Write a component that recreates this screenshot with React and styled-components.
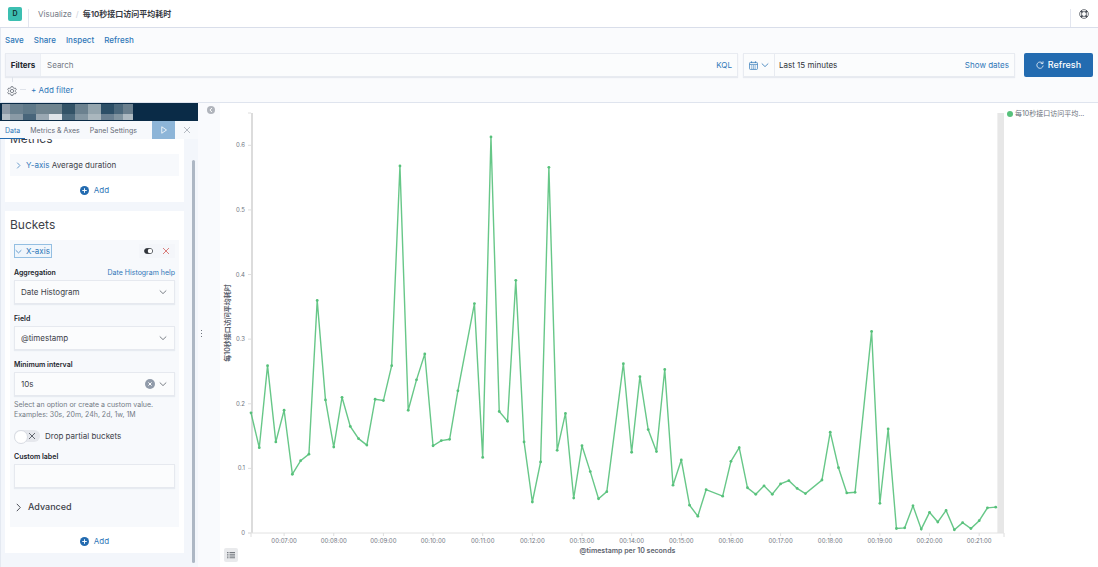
import React, { useLayoutEffect, useRef, useState } from 'react';
import styled, { createGlobalStyle } from 'styled-components';

const c = {
  blue: '#2f77b8',
  primary: '#236bb0',
  text: '#3d4149',
  dark: '#22252c',
  subdued: '#737984',
  border: '#e4e9f1',
  surface: '#fafbfd',
  side: '#f3f6fb',
  green: '#57c17b',
};

const Global = createGlobalStyle`
  * { box-sizing: border-box; }
  body {
    margin: 0;
    background: #fff;
    color: ${c.text};
    font: 8px/12px Inter, "Noto Sans CJK SC", sans-serif;
  }
  button, input, select { font: inherit; color: inherit; margin: 0; }
  a { color: ${c.blue}; text-decoration: none; }
  h2 { margin: 0; }
`;

const Shell = styled.div`
  display: flex;
  flex-direction: column;
  height: 100vh;
`;

const Header = styled.header`
  display: flex;
  align-items: stretch;
  height: 28px;
  border-bottom: 1px solid #d9deea;
`;
const LogoCell = styled.div`
  display: flex;
  align-items: center;
  padding: 0 6px 0 8px;
`;
const Logo = styled.a`
  width: 14px;
  height: 14px;
  border-radius: 2px;
  background: #3cbfb1;
  color: #10302f;
  font-size: 7px;
  font-weight: 600;
  line-height: 14px;
  text-align: center;
`;
const Rule = styled.span`
  width: 1px;
  margin-top: 9px;
  background: #e3e6ef;
`;
const Crumbs = styled.nav`
  display: flex;
  flex: 1;
  align-items: center;
  gap: 4px;
  padding-left: 9px;
  a { color: ${c.subdued}; }
  span { color: #cdd2db; }
  strong { color: #343741; font-weight: 600; }
`;
const HelpButton = styled.button`
  display: flex;
  align-items: center;
  padding: 0 9px 0 8px;
  border: 0;
  background: none;
`;

const TopZone = styled.section`
  display: flex;
  flex-direction: column;
  height: 75px;
  border-left: 1px solid ${c.border};
  border-bottom: 1px solid #dfe4ee;
  background: ${c.surface};
`;
const Menu = styled.nav`
  display: flex;
  align-items: center;
  gap: 10px;
  height: 25px;
  padding: 0 4px 2px;
  a { font-weight: 500; }
`;
const QueryRow = styled.div`
  display: flex;
  gap: 5px;
  height: 24px;
  padding: 0 5px 0 4px;
`;
const Field = styled.div`
  display: flex;
  align-items: stretch;
  flex: ${(p) => (p.$grow ? '1 1 0' : '0 0 272px')};
  min-width: 0;
  background: #fbfcfd;
  border: 1px solid #e8ebf1;
  box-shadow: 0 1px 1px rgba(100, 115, 150, 0.12);
`;
const FilterTab = styled.button`
  width: 35px;
  padding: 0;
  border: 0;
  border-right: 1px solid #eceff4;
  background: #f2f4f9;
  color: ${c.dark};
  font-weight: 700;
`;
const SearchInput = styled.input`
  flex: 1;
  min-width: 0;
  padding: 0 6px;
  border: 0;
  outline: 0;
  background: none;
  &::placeholder { color: ${c.subdued}; opacity: 1; }
`;
const LinkButton = styled.button`
  padding: 0 5px;
  border: 0;
  background: none;
  color: ${c.blue};
`;
const QuickSelect = styled.button`
  display: flex;
  align-items: center;
  gap: 3px;
  width: 31px;
  padding: 0 0 0 5px;
  border: 0;
  border-right: 1px solid #e8ebf1;
  background: none;
  color: ${c.blue};
`;
const RangeText = styled.span`
  flex: 1;
  padding-left: 4px;
  color: #2f333a;
  line-height: 22px;
`;
const RefreshButton = styled.button`
  display: flex;
  align-items: center;
  justify-content: center;
  gap: 4px;
  width: 69px;
  margin-left: 4px;
  padding: 0;
  border: 0;
  border-radius: 2px;
  background: ${c.primary};
  color: #fff;
  font-size: 9px;
  font-weight: 500;
`;
const FilterRow = styled.div`
  display: flex;
  align-items: center;
  height: 25px;
  padding-left: 6px;
  gap: 3px;
  a { padding-left: 2px; }
`;
const GearStack = styled.button`
  display: flex;
  flex-direction: column;
  align-items: center;
  align-self: flex-start;
  gap: 4px;
  padding: 0;
  border: 0;
  background: none;
  color: #666c76;
  &::before { content: ''; width: 1px; height: 5px; background: #dfe3ea; }
`;
const Dash = styled.span`
  width: 6px;
  height: 1px;
  background: #dfe3ea;
`;

const Editor = styled.main`
  display: grid;
  grid-template-columns: 198px 22px minmax(0, 1fr);
  flex: 1;
  min-height: 0;
`;
const Sidebar = styled.aside`
  display: flex;
  flex-direction: column;
  min-height: 0;
  background: ${c.side};
`;
const IndexBar = styled.div`
  height: 18px;
  padding: 1px 2px;
  background: #0a2b47;
`;
const Mosaic = styled.div`
  display: grid;
  grid-template-columns: 8px repeat(8, 13px) 9px 10px;
  grid-template-rows: 10px 6px;
`;
const Tile = styled.i`
  background: ${(p) => p.$tone};
`;
const Tabs = styled.div`
  display: flex;
  align-items: stretch;
  height: 18px;
  background: #f7f9fc;
`;
const Tab = styled.button`
  padding: 2px 5px 0;
  border: 0;
  border-bottom: 1px solid ${(p) => (p.$active ? c.primary : 'transparent')};
  background: none;
  color: ${(p) => (p.$active ? c.blue : '#666c77')};
  font-size: 7px;
  line-height: 15px;
  white-space: nowrap;
`;
const TabIcon = styled.button`
  display: flex;
  align-items: center;
  justify-content: center;
  width: 23px;
  margin-left: ${(p) => (p.$apply ? 'auto' : '0')};
  padding: 0;
  border: 0;
  background: ${(p) => (p.$apply ? '#8db5d8' : 'none')};
  color: ${(p) => (p.$apply ? '#fff' : '#a3a9b3')};
`;
const SideBody = styled.div`
  display: flex;
  flex: 1;
  min-height: 0;
  border-left: 1px solid ${c.border};
`;
const Scroller = styled.div`
  flex: 1;
  overflow-y: auto;
  scrollbar-width: none;
  padding: 4px 8px 14px 4px;
`;
const Rail = styled.div`
  width: 6px;
  padding: 21px 3px 4px 0;
`;
const Thumb = styled.div`
  width: 3px;
  height: 100%;
  border-radius: 2px;
  background: #adb7c4;
`;
const Card = styled.section`
  padding: 5px;
  background: #fff;
  & + & { margin-top: 9px; }
  h2 {
    padding: 0 0 6px;
    font-size: 12px;
    font-weight: 400;
    line-height: 18px;
  }
`;
const Item = styled.div`
  padding: ${(p) => (p.$open ? '4px 4px 12px' : '0 4px')};
  background: #f7f9fc;
`;
const ItemToggle = styled.button`
  display: flex;
  align-items: center;
  gap: 4px;
  height: ${(p) => (p.$focus ? '14px' : '22px')};
  padding: ${(p) => (p.$focus ? '0 1px 0 0' : '0 1px')};
  border: ${(p) => (p.$focus ? '1px solid #94bfe2' : '0')};
  background: ${(p) => (p.$focus ? '#f0f6fc' : 'none')};
  color: ${c.text};
  white-space: nowrap;
  svg, em { color: ${c.blue}; font-style: normal; }
`;
const ItemHead = styled.div`
  display: flex;
  align-items: center;
  justify-content: space-between;
  height: 14px;
`;
const IconPair = styled.div`
  display: flex;
  background: #f4f6fa;
  button {
    display: flex;
    align-items: center;
    justify-content: center;
    width: 18px;
    height: 14px;
    padding: 0;
    border: 0;
    background: none;
  }
`;
const AddButton = styled.button`
  display: flex;
  align-items: center;
  justify-content: center;
  gap: 5px;
  width: 100%;
  height: 14px;
  margin-top: 7px;
  padding: 0;
  border: 0;
  background: none;
  color: ${c.blue};
`;
const FormRow = styled.div`
  display: flex;
  flex-direction: column;
  margin-top: 9px;
`;
const LabelLine = styled.div`
  display: flex;
  justify-content: space-between;
  height: 13px;
  font-size: 7px;
  line-height: 11px;
  label { color: ${c.dark}; font-weight: 600; }
`;
const Control = styled.div`
  display: flex;
  align-items: center;
  gap: 4px;
  height: 24px;
  padding-right: 7px;
  border: 1px solid #e6e9ef;
  background: #fbfcfd;
  box-shadow: 0 1px 1px rgba(100, 115, 150, 0.1);
  input, select {
    flex: 1;
    width: 100%;
    min-width: 0;
    height: 22px;
    padding: 0 0 0 6px;
    border: 0;
    outline: 0;
    appearance: none;
    background: none;
  }
  select { margin-right: -16px; padding-right: 16px; }
  svg { flex: none; pointer-events: none; color: #5b616b; }
`;
const ClearButton = styled.button`
  display: flex;
  padding: 0;
  border: 0;
  background: none;
`;
const Help = styled.p`
  margin: 4px 0 0;
  color: ${c.subdued};
  font-size: 7px;
  line-height: 10px;
  white-space: nowrap;
`;
const SwitchRow = styled.label`
  display: flex;
  align-items: center;
  gap: 5px;
  height: 12px;
  margin-top: 10px;
`;
const Switch = styled.input`
  appearance: none;
  width: 26px;
  height: 12px;
  margin: 0;
  border-radius: 6px;
  background:
    linear-gradient(45deg, transparent 46%, #62676f 46%, #62676f 54%, transparent 54%) 15px 3px / 6px 6px no-repeat,
    linear-gradient(-45deg, transparent 46%, #62676f 46%, #62676f 54%, transparent 54%) 15px 3px / 6px 6px no-repeat,
    #e6e8ed;
  &::before {
    content: '';
    display: block;
    width: 12px;
    height: 12px;
    border: 1px solid #d8dce3;
    border-radius: 50%;
    background: #fff;
  }
`;
const AdvancedButton = styled.button`
  display: flex;
  align-items: center;
  gap: 5px;
  height: 16px;
  margin-top: 11px;
  padding: 0;
  border: 0;
  background: none;
  font-size: 9px;
  font-weight: 500;
`;

const Resizer = styled.div`
  display: flex;
  flex-direction: column;
  justify-content: space-between;
  background: #f9fafd;
  button {
    display: flex;
    padding: 0;
    border: 0;
    background: none;
    align-self: flex-end;
    margin: 3px 5px 0 0;
  }
  svg:last-child { margin-left: 2px; }
  &::after { content: ''; height: 12px; }
`;
const VisPane = styled.section`
  display: grid;
  grid-template-columns: minmax(0, 1fr) 92px;
  min-height: 0;
  position: relative;
`;
const ChartBox = styled.div`
  min-width: 0;
  min-height: 0;
  overflow: hidden;
  svg { display: block; }
  text { fill: #6f7580; font-size: 6px; }
  text.title { fill: #5d636e; font-size: 7px; font-weight: 600; }
`;
const Legend = styled.ul`
  margin: 0;
  padding: 5px 11px 0 1px;
  list-style: none;
  font-size: 7px;
  color: #6b717c;
`;
const LegendItem = styled.li`
  display: flex;
  align-items: center;
  gap: 2px;
  &::before {
    content: '';
    flex: none;
    width: 6px;
    height: 6px;
    border-radius: 50%;
    background: ${c.green};
  }
  span { overflow: hidden; white-space: nowrap; text-overflow: ellipsis; }
`;
const LegendToggle = styled.button`
  position: absolute;
  left: 4px;
  bottom: 5px;
  display: flex;
  align-items: center;
  justify-content: center;
  width: 14px;
  height: 14px;
  padding: 0;
  border: 0;
  border-radius: 2px;
  background: #e9eaec;
  color: #50555e;
`;

const Svg = ({ size = 8, children, ...rest }) => (
  <svg width={size} height={size} viewBox="0 0 16 16" fill="none" stroke="currentColor" strokeWidth="1.6" aria-hidden="true" {...rest}>
    {children}
  </svg>
);
const ChevronDown = (p) => <Svg {...p}><path d="M1.5 5 8 11.2 14.5 5" /></Svg>;
const ChevronRight = (p) => <Svg {...p}><path d="M5 1.5 11.2 8 5 14.5" /></Svg>;
const Cross = (p) => <Svg {...p}><path d="M2 2l12 12M14 2 2 14" /></Svg>;
const Plus = () => (
  <Svg size={9} stroke="none">
    <circle cx="8" cy="8" r="8" fill={c.primary} />
    <path d="M8 4v8M4 8h8" stroke="#fff" strokeWidth="1.7" />
  </Svg>
);
const LifeRing = () => (
  <Svg size={10} stroke="#454a53" strokeWidth="1.2">
    <circle cx="8" cy="8" r="7" />
    <circle cx="8" cy="8" r="4" />
    <path d="M3.1 3.1l2.3 2.3M12.9 3.1l-2.3 2.3M3.1 12.9l2.3-2.3M12.9 12.9l-2.3-2.3" strokeWidth="3" />
  </Svg>
);
const Gear = () => (
  <Svg size={10} strokeWidth="1.3">
    <path d="M6.6 1h2.8l.5 1.9 1.5.9 1.9-.6 1.5 2.5-1.4 1.4v1.8l1.4 1.4-1.5 2.5-1.9-.6-1.5.9L9.4 15H6.6l-.5-1.9-1.5-.9-1.9.6-1.5-2.5 1.400-1.400V7.100L1.200 5.700l1.500-2.500 1.900.6 1.500-.9z" />
    <circle cx="8" cy="8" r="2.6" />
  </Svg>
);
const Calendar = () => (
  <Svg size={9} strokeWidth="1.3">
    <rect x="1" y="2.5" width="14" height="12.5" rx="1.5" />
    <path d="M1 6h14M4.5 .5v3M11.5 .5v3" />
    <path d="M4 8.5h8M4 10.7h8M4 12.9h8" strokeDasharray="1.8 1.2" />
  </Svg>
);
const RefreshIcon = () => (
  <Svg size={8} strokeWidth="1.5">
    <path d="M12.8 4.2A6.3 6.3 0 1 0 14.3 9M14 .8v4.4H9.5" />
  </Svg>
);

/* [ten-second bucket, average duration in ms]; buckets without hits are absent */
const SERIES = [
  [0, 186], [1, 132], [2, 259], [3, 141], [4, 190], [5, 91], [6, 112], [7, 122], [8, 360], [9, 206],
  [10, 133], [11, 210], [12, 165], [13, 146], [14, 136], [15, 207], [16, 205], [17, 259], [18, 568], [19, 190],
  [20, 237], [21, 277], [22, 135], [23, 143], [24, 145], [25, 220], [27, 355], [28, 117], [29, 613], [30, 188],
  [31, 173], [32, 391], [33, 141], [34, 48], [35, 110], [36, 566], [37, 128], [38, 185], [39, 54], [40, 135],
  [41, 95], [42, 53], [43, 64], [45, 262], [46, 125], [47, 242], [48, 160], [49, 126], [50, 253], [51, 74],
  [52, 113], [53, 43], [54, 26], [55, 67], [57, 57], [58, 111], [59, 132], [60, 70], [61, 60], [62, 73],
  [63, 60], [64, 76], [65, 81], [66, 69], [67, 61], [69, 82], [70, 156], [71, 101], [72, 62], [73, 63],
  [75, 312], [76, 46], [77, 161], [78, 7], [79, 8], [80, 42], [81, 6], [82, 32], [83, 17], [84, 35],
  [85, 5], [86, 16], [87, 7], [88, 19], [89, 39], [90, 40],
];
const BUCKETS = 91;
const MAX = 650;

function Chart() {
  const box = useRef(null);
  const [size, setSize] = useState({ w: 786, h: 464 });
  useLayoutEffect(() => {
    const measure = () => setSize({ w: box.current.clientWidth, h: box.current.clientHeight });
    measure();
    window.addEventListener('resize', measure);
    return () => window.removeEventListener('resize', measure);
  }, []);

  const left = 31;
  const right = size.w - 2;
  const top = 10;
  const bottom = size.h - 34;
  const x = (i) => left + ((right - left) * i) / BUCKETS;
  const y = (v) => bottom - ((bottom - top) * v) / MAX;
  const minutes = Array.from({ length: 15 }, (_, i) => i + 7);
  const points = SERIES.map(([i, v]) => [x(i), y(v)]);

  return (
    <ChartBox ref={box}>
      <svg width={size.w} height={size.h} role="img" aria-label="每10秒接口访问平均耗时">
        <rect x={x(90.2)} y={top} width={right - x(90.2)} height={bottom - top} fill="#e7e7e7" />
        <rect x={left} y={top} width="2" height={bottom - top} fill="#dcdcdc" />
        <path d={`M${left - 3} ${top}H${left}M${left} ${bottom}v4M${right} ${bottom}v4`} stroke="#dedede" />
        <path d={`M${left - 3} ${bottom}H${right}`} stroke="#e2e2e2" />
        {[0, 1, 2, 3, 4, 5, 6].map((t) => (
          <g key={t}>
            <path d={`M${left - 3} ${y(t * 100)}h3`} stroke="#dedede" />
            <text x={left - 6} y={y(t * 100) + 2} textAnchor="end">{t ? `0.${t}` : '0'}</text>
          </g>
        ))}
        {minutes.map((m) => (
          <g key={m}>
            <path d={`M${x((m - 7) * 6 + 4)} ${bottom}v3`} stroke="#dedede" />
            <text x={x((m - 7) * 6 + 4)} y={bottom + 10} textAnchor="middle">
              {`00:${String(m).padStart(2, '0')}:00`}
            </text>
          </g>
        ))}
        <text className="title" x={(left + right) / 2} y={bottom + 20} textAnchor="middle">@timestamp per 10 seconds</text>
        <text className="title" textAnchor="middle" transform={`translate(10 ${(top + bottom) / 2}) rotate(-90)`}>
          每10秒接口访问平均耗时
        </text>
        <polyline points={points.map((p) => p.join(',')).join(' ')} fill="none" stroke={c.green} strokeWidth="1.4" strokeOpacity="0.9" />
        {points.map(([px, py]) => (
          <circle key={px} cx={px} cy={py} r="1.4" fill={c.green} />
        ))}
      </svg>
    </ChartBox>
  );
}

const TILES = [
  '#8e9ba8', '#6a8190', '#5f7989', '#70848f', '#6f848f', '#335367', '#6b818f', '#94a5ae', '#2c4f67', '#4b687c', '#6a7f8e',
  '#b3bdc5', '#8a9aa6', '#48657a', '#9aa8b2', '#e0e5e9', '#4e6b7e', '#8497a3', '#aab7be', '#6a8091', '#8194a0', '#adb9c1',
];

function SideForm() {
  const scroller = useRef(null);
  useLayoutEffect(() => {
    scroller.current.scrollTop = scroller.current.scrollHeight;
  }, []);
  return (
    <SideBody>
      <Scroller ref={scroller}>
        <Card>
          <h2>Metrics</h2>
          <Item>
            <ItemToggle><ChevronRight size={7} /><span><em>Y-axis</em> Average duration</span></ItemToggle>
          </Item>
          <AddButton><Plus />Add</AddButton>
        </Card>
        <Card>
          <h2>Buckets</h2>
          <Item $open>
            <ItemHead>
              <ItemToggle $focus><ChevronDown size={7} /><em>X-axis</em></ItemToggle>
              <IconPair>
                <button aria-label="Disable aggregation">
                  <svg width="9" height="6" viewBox="0 0 18 12">
                    <rect x="1" y="1" width="16" height="10" rx="5" fill="#30343b" stroke="#30343b" strokeWidth="1.5" />
                    <circle cx="12" cy="6" r="4.5" fill="#fff" />
                  </svg>
                </button>
                <button aria-label="Remove aggregation"><Cross size={8} color="#d2605b" /></button>
              </IconPair>
            </ItemHead>
            <FormRow>
              <LabelLine>
                <label htmlFor="agg">Aggregation</label>
                <a href="#help">Date Histogram help</a>
              </LabelLine>
              <Control>
                <select id="agg"><option>Date Histogram</option></select>
                <ChevronDown />
              </Control>
            </FormRow>
            <FormRow>
              <LabelLine><label htmlFor="field">Field</label></LabelLine>
              <Control>
                <select id="field"><option>@timestamp</option></select>
                <ChevronDown />
              </Control>
            </FormRow>
            <FormRow>
              <LabelLine><label htmlFor="interval">Minimum interval</label></LabelLine>
              <Control>
                <input id="interval" defaultValue="10s" />
                <ClearButton aria-label="Clear input">
                  <Svg size={10} stroke="none">
                    <circle cx="8" cy="8" r="8" fill="#919baa" />
                    <path d="M5.5 5.5l5 5M10.5 5.5l-5 5" stroke="#fff" strokeWidth="1.6" />
                  </Svg>
                </ClearButton>
                <ChevronDown />
              </Control>
              <Help>Select an option or create a custom value.<br />Examples: 30s, 20m, 24h, 2d, 1w, 1M</Help>
            </FormRow>
            <SwitchRow><Switch type="checkbox" role="switch" />Drop partial buckets</SwitchRow>
            <FormRow>
              <LabelLine><label htmlFor="custom">Custom label</label></LabelLine>
              <Control><input id="custom" /></Control>
            </FormRow>
            <AdvancedButton><ChevronRight size={9} />Advanced</AdvancedButton>
          </Item>
          <AddButton><Plus />Add</AddButton>
        </Card>
      </Scroller>
      <Rail><Thumb /></Rail>
    </SideBody>
  );
}

export default function App() {
  return (
    <Shell>
      <Global />
      <Header>
        <LogoCell><Logo href="#home">D</Logo></LogoCell>
        <Rule />
        <Crumbs aria-label="Breadcrumbs">
          <a href="#visualize">Visualize</a>
          <span>/</span>
          <strong>每10秒接口访问平均耗时</strong>
        </Crumbs>
        <Rule />
        <HelpButton aria-label="Help"><LifeRing /></HelpButton>
      </Header>

      <TopZone>
        <Menu>
          <a href="#save">Save</a>
          <a href="#share">Share</a>
          <a href="#inspect">Inspect</a>
          <a href="#refresh">Refresh</a>
        </Menu>
        <QueryRow>
          <Field $grow>
            <FilterTab>Filters</FilterTab>
            <SearchInput placeholder="Search" aria-label="Search" />
            <LinkButton>KQL</LinkButton>
          </Field>
          <Field>
            <QuickSelect aria-label="Date quick select"><Calendar /><ChevronDown /></QuickSelect>
            <RangeText>Last 15 minutes</RangeText>
            <LinkButton>Show dates</LinkButton>
          </Field>
          <RefreshButton><RefreshIcon />Refresh</RefreshButton>
        </QueryRow>
        <FilterRow>
          <GearStack aria-label="Filter options"><Gear /></GearStack>
          <Dash />
          <a href="#add-filter">+ Add filter</a>
        </FilterRow>
      </TopZone>

      <Editor>
        <Sidebar>
          <IndexBar>
            <Mosaic>{TILES.map((tone, i) => <Tile key={i} $tone={tone} />)}</Mosaic>
          </IndexBar>
          <Tabs>
            <Tab $active>Data</Tab>
            <Tab>Metrics &amp; Axes</Tab>
            <Tab>Panel Settings</Tab>
            <TabIcon $apply aria-label="Apply changes">
              <Svg size={8}><path d="M3.5 1.5 13 8l-9.5 6.5z" /></Svg>
            </TabIcon>
            <TabIcon aria-label="Discard changes"><Cross size={8} /></TabIcon>
          </Tabs>
          <SideForm />
        </Sidebar>
        <Resizer>
          <button aria-label="Collapse editor">
            <Svg size={8} stroke="none">
              <circle cx="8" cy="8" r="8" fill="#b0b4bc" />
              <path d="M9.8 4 5.8 8l4 4" stroke="#fff" strokeWidth="2" />
            </Svg>
          </button>
          <svg width="3" height="9" viewBox="0 0 3 9" fill="#70757f" aria-hidden="true">
            <rect x="1" y="0" width="1" height="1" />
            <rect x="1" y="3" width="1" height="1" />
            <rect x="1" y="6" width="1" height="1" />
          </svg>
        </Resizer>
        <VisPane>
          <Chart />
          <Legend><LegendItem><span>每10秒接口访问平均耗时</span></LegendItem></Legend>
          <LegendToggle aria-label="Toggle legend">
            <Svg size={8}><path d="M0 3h3M5 3h11M0 6.5h3M5 6.5h11M0 10h3M5 10h11M0 13.5h3M5 13.5h11" strokeWidth="1.5" /></Svg>
          </LegendToggle>
        </VisPane>
      </Editor>
    </Shell>
  );
}
